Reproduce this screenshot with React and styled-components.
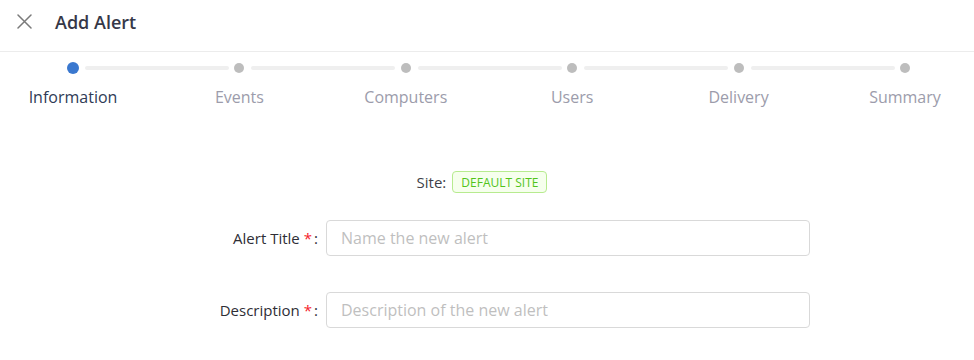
import styled, { createGlobalStyle } from "styled-components";

const GlobalStyle = createGlobalStyle`
  body {
    margin: 0;
    background: #fff;
    font-family: "Open Sans", "Noto Sans", sans-serif;
    overflow: hidden;
  }
`;

const Page = styled.div`
  width: 974px;
  height: 360px;
  background: #fff;
`;

const Header = styled.div`
  display: flex;
  align-items: center;
  height: 52px;
  padding: 0 0 8px 17px;
  border-bottom: 1px solid #ececec;
  box-sizing: border-box;
`;

const CloseButton = styled.button`
  display: flex;
  align-items: center;
  justify-content: center;
  width: 15px;
  height: 15px;
  padding: 0;
  margin-right: 23px;
  border: none;
  background: none;
  cursor: pointer;
`;

const Title = styled.h1`
  margin: 0;
  font-size: 18px;
  font-weight: 600;
  color: #363848;
`;

const Steps = styled.div`
  display: grid;
  grid-template-columns: repeat(6, 146px);
  column-gap: 20.4px;
  padding-top: 10px;
`;

const Step = styled.div`
  position: relative;
  display: flex;
  flex-direction: column;
  align-items: center;

  &::after {
    content: "";
    display: ${(p) => (p.$last ? "none" : "block")};
    position: absolute;
    top: 4px;
    left: calc(50% + 12px);
    width: 144px;
    height: 4px;
    border-radius: 2px;
    background: #efefef;
  }
`;

const DotSlot = styled.div`
  display: flex;
  align-items: center;
  justify-content: center;
  height: 12px;
`;

const Dot = styled.span`
  width: ${(p) => (p.$active ? "12px" : "10px")};
  height: ${(p) => (p.$active ? "12px" : "10px")};
  border-radius: 50%;
  background: ${(p) => (p.$active ? "#3a78cf" : "#bdbdbd")};
`;

const StepLabel = styled.span`
  margin-top: 12px;
  font-size: 16px;
  line-height: 22px;
  color: ${(p) => (p.$active ? "#2f3b56" : "#9c9cab")};
  white-space: nowrap;
`;

const SiteRow = styled.div`
  display: flex;
  justify-content: center;
  align-items: center;
  gap: 6px;
  margin-top: 63px;
  padding-right: 10px;
  font-size: 15px;
  color: #3f3f48;
`;

const Tag = styled.span`
  display: inline-flex;
  align-items: center;
  height: 22px;
  padding: 0 8px;
  border: 1px solid #b7eb8f;
  border-radius: 4px;
  background: #f6ffed;
  color: #52c41a;
  font-size: 12px;
  box-sizing: border-box;
`;

const Form = styled.form`
  display: grid;
  grid-template-columns: 234px 484px;
  column-gap: 8px;
  row-gap: 36px;
  align-items: center;
  margin-top: 27px;
  padding-left: 84px;
`;

const Label = styled.label`
  text-align: right;
  font-size: 15px;
  color: #2e2e36;
`;

const Required = styled.span`
  color: #f5222d;
  margin-left: 4px;
  margin-right: 2px;
`;

const Input = styled.input`
  height: 36px;
  padding: 0 14px;
  border: 1px solid #d9d9d9;
  border-radius: 4px;
  font-family: inherit;
  font-size: 16px;
  color: #333;
  box-sizing: border-box;
  outline: none;

  &::placeholder {
    color: #bfbfbf;
  }
`;

const steps = ["Information", "Events", "Computers", "Users", "Delivery", "Summary"];

export default function App() {
  return (
    <Page>
      <GlobalStyle />
      <Header>
        <CloseButton type="button" aria-label="Close">
          <svg width="15" height="15" viewBox="0 0 15 15">
            <path d="M1 1 L14 14 M14 1 L1 14" stroke="#7a7a7a" strokeWidth="1.5" strokeLinecap="round" />
          </svg>
        </CloseButton>
        <Title>Add Alert</Title>
      </Header>
      <Steps>
        {steps.map((s, i) => (
          <Step key={s} $last={i === steps.length - 1}>
            <DotSlot>
              <Dot $active={i === 0} />
            </DotSlot>
            <StepLabel $active={i === 0}>{s}</StepLabel>
          </Step>
        ))}
      </Steps>
      <SiteRow>
        Site:
        <Tag>DEFAULT SITE</Tag>
      </SiteRow>
      <Form onSubmit={(e) => e.preventDefault()}>
        <Label htmlFor="title">
          Alert Title<Required>*</Required>:
        </Label>
        <Input id="title" placeholder="Name the new alert" />
        <Label htmlFor="desc">
          Description<Required>*</Required>:
        </Label>
        <Input id="desc" placeholder="Description of the new alert" />
      </Form>
    </Page>
  );
}
